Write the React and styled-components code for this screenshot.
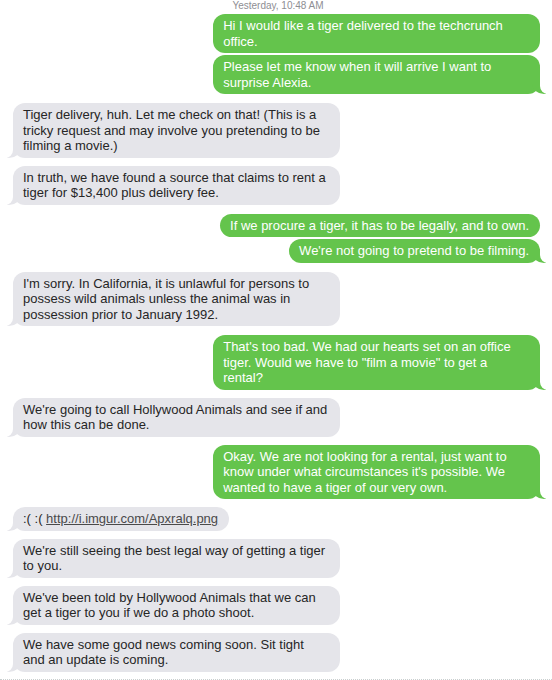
import React from "react";
import styled, { createGlobalStyle } from "styled-components";

const Global = createGlobalStyle`
  html, body {
    margin: 0;
    padding: 0;
    background: #ffffff;
  }
  body {
    font-family: "Liberation Sans", Arial, sans-serif;
    -webkit-font-smoothing: antialiased;
  }
`;

const GREEN = "#64c44c";
const GRAY = "#e5e5ea";

const Thread = styled.div`
  width: 552px;
  height: 680px;
  overflow: hidden;
  box-sizing: border-box;
  display: flex;
  flex-direction: column;
  border-bottom: 1px dotted #c9cfcf;
`;

const Stamp = styled.div`
  padding-left: 4px;
  text-align: center;
  font-size: 10px;
  line-height: 11px;
  color: #8e8e93;
`;

const Row = styled.div`
  display: flex;
  justify-content: ${(p) => (p.$me ? "flex-end" : "flex-start")};
  padding: ${(p) => (p.$me ? "0 12px 0 0" : "0 0 0 13px")};
  margin-top: ${(p) => p.$gap}px;
`;

const Bubble = styled.div`
  position: relative;
  max-width: 305.8px;
  padding: 4px 11px 4px 10px;
  border-radius: 12px;
  font-size: 13px;
  line-height: 15.5px;
  background: ${(p) => (p.$me ? GREEN : GRAY)};
  color: ${(p) => (p.$me ? "#ffffff" : "#262626")};

  ${(p) =>
    p.$tail &&
    (p.$me
      ? `
    &::before {
      content: "";
      position: absolute;
      bottom: 0;
      right: -6px;
      width: 14px;
      height: 14px;
      background: ${GREEN};
      border-bottom-left-radius: 12px 10px;
    }
    &::after {
      content: "";
      position: absolute;
      bottom: 0;
      right: -14px;
      width: 14px;
      height: 14px;
      background: #ffffff;
      border-bottom-left-radius: 8px;
    }
  `
      : `
    &::before {
      content: "";
      position: absolute;
      bottom: 0;
      left: -6px;
      width: 14px;
      height: 14px;
      background: ${GRAY};
      border-bottom-right-radius: 12px 10px;
    }
    &::after {
      content: "";
      position: absolute;
      bottom: 0;
      left: -14px;
      width: 14px;
      height: 14px;
      background: #ffffff;
      border-bottom-right-radius: 8px;
    }
  `)}
`;

const Link = styled.a`
  color: #4a4a4a;
  text-decoration: underline;
`;

const messages = [
  { me: true, gap: 3, tail: false, text: "Hi I would like a tiger delivered to the techcrunch office." },
  { me: true, gap: 2, tail: true, text: "Please let me know when it will arrive I want to surprise Alexia." },
  { me: false, gap: 9, tail: true, text: "Tiger delivery, huh. Let me check on that! (This is a tricky request and may involve you pretending to be filming a movie.)" },
  { me: false, gap: 8, tail: true, text: "In truth, we have found a source that claims to rent a tiger for $13,400 plus delivery fee." },
  { me: true, gap: 9, tail: false, text: "If we procure a tiger, it has to be legally, and to own." },
  { me: true, gap: 2, tail: true, text: "We're not going to pretend to be filming." },
  { me: false, gap: 9, tail: true, text: "I'm sorry. In California, it is unlawful for persons to possess wild animals unless the animal was in possession prior to January 1992." },
  { me: true, gap: 9, tail: true, text: "That's too bad. We had our hearts set on an office tiger. Would we have to \"film a movie\" to get a rental?" },
  { me: false, gap: 8, tail: true, text: "We're going to call Hollywood Animals and see if and how this can be done." },
  { me: true, gap: 8, tail: true, text: "Okay. We are not looking for a rental, just want to know under what circumstances it's possible. We wanted to have a tiger of our very own." },
  { me: false, gap: 8, tail: true, link: true },
  { me: false, gap: 8, tail: true, text: "We're still seeing the best legal way of getting a tiger to you." },
  { me: false, gap: 8, tail: true, text: "We've been told by Hollywood Animals that we can get a tiger to you if we do a photo shoot." },
  { me: false, gap: 8, tail: true, text: "We have some good news coming soon. Sit tight and an update is coming." },
];

export default function App() {
  return (
    <>
      <Global />
      <Thread>
        <Stamp>Yesterday, 10:48 AM</Stamp>
        {messages.map((m, i) => (
          <Row key={i} $me={m.me} $gap={m.gap}>
            <Bubble $me={m.me} $tail={m.tail}>
              {m.link ? (
                <>
                  :( :( <Link href="#">http://i.imgur.com/Apxralq.png</Link>
                </>
              ) : (
                m.text
              )}
            </Bubble>
          </Row>
        ))}
      </Thread>
    </>
  );
}
